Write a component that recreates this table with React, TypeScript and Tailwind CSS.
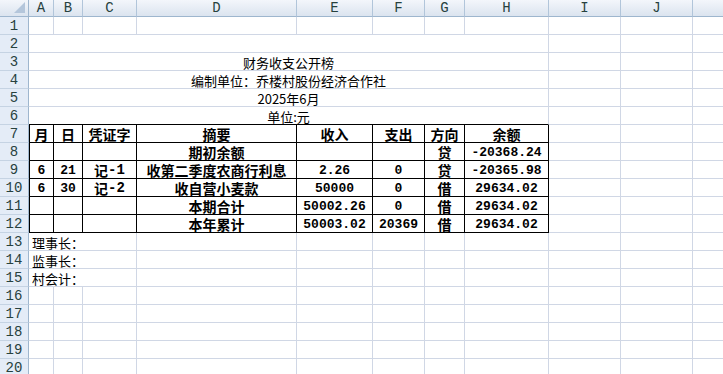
import React from 'react';

// column letters A..K
const COLS = ['A', 'B', 'C', 'D', 'E', 'F', 'G', 'H', 'I', 'J', 'K'];

const SPAN: Record<number, string> = { 1: '', 3: 'col-span-3', 8: 'col-span-8' };

const cjk = "font-['Noto_Sans_CJK_SC','Noto_Sans',sans-serif]";
const mono = "font-['Liberation_Mono','Noto_Sans_CJK_SC',monospace]";

interface CellProps {
  span?: number;
  children?: React.ReactNode;
  className?: string;
  r?: boolean;
  b?: boolean;
  l?: boolean;
}

function Cell({ span = 1, children, className = '', r, b, l }: CellProps) {
  return (
    <div
      className={`flex items-center leading-none whitespace-nowrap overflow-hidden text-black border-r border-b ${SPAN[span]} ${r ? 'border-r-black' : 'border-r-[#d0d7e5]'} ${b ? 'border-b-black' : 'border-b-[#d0d7e5]'} ${l ? 'border-l border-l-black' : ''} ${className}`}
    >
      {children}
    </div>
  );
}

function RowHead({ n }: { n: number }) {
  return (
    <div className={`flex items-center justify-center leading-none pt-[1px] bg-[#e4ecf7] border-r border-b border-r-[#9eb6ce] border-b-[#c5d3e3] text-[14px] text-[#27413e] ${mono}`}>
      {n}
    </div>
  );
}

// table body: month, day, voucher, summary, income, expense, direction, balance
const TABLE: string[][] = [
  ['月', '日', '凭证字', '摘要', '收入', '支出', '方向', '余额'],
  ['', '', '', '期初余额', '', '', '贷', '-20368.24'],
  ['6', '21', '记-1', '收第二季度农商行利息', '2.26', '0', '贷', '-20365.98'],
  ['6', '30', '记-2', '收自营小麦款', '50000', '0', '借', '29634.02'],
  ['', '', '', '本期合计', '50002.26', '0', '借', '29634.02'],
  ['', '', '', '本年累计', '50003.02', '20369', '借', '29634.02'],
];

const TITLES: Record<number, string> = {
  3: '财务收支公开榜',
  4: '编制单位：乔楼村股份经济合作社',
  5: '2025年6月',
  6: '单位:元',
};

const SIGNS: Record<number, string> = { 13: '理事长：', 14: '监事长：', 15: '村会计：' };

function Tail() {
  return (
    <>
      <Cell />
      <Cell />
      <Cell />
    </>
  );
}

export default function App() {
  const rows: React.ReactNode[] = [];

  for (let n = 1; n <= 20; n++) {
    const cells: React.ReactNode[] = [<RowHead key="h" n={n} />];

    if (n === 1 || n >= 16) {
      COLS.forEach(c => cells.push(<Cell key={c} />));
    } else if (n >= 2 && n <= 6) {
      cells.push(
        <Cell key="m" span={8} b={n === 6} className={`justify-center pt-[1px] text-[13px] ${cjk}`}>
          {TITLES[n] || ''}
        </Cell>
      );
      cells.push(<Tail key="t" />);
    } else if (n >= 7 && n <= 12) {
      const data = TABLE[n - 7];
      data.forEach((txt, i) => {
        const isNum = /^[-0-9.]+$/.test(txt);
        cells.push(
          <Cell
            key={i}
            r
            b
            l={i === 0}
            className={`justify-center pt-[1px] font-bold ${isNum ? `text-[13px] ${mono}` : `text-[14px] ${cjk}`}`}
          >
            {txt.startsWith('记') ? (
              <>
                <span className={cjk}>记</span>
                <span className={mono}>{txt.slice(1)}</span>
              </>
            ) : (
              txt
            )}
          </Cell>
        );
      });
      cells.push(<Tail key="t" />);
    } else {
      cells.push(
        <Cell key="s" span={3} className={`pl-[3px] pt-[1px] text-[13px] ${cjk}`}>
          {SIGNS[n]}
        </Cell>
      );
      ['D', 'E', 'F', 'G', 'H', 'I', 'J', 'K'].forEach(c => cells.push(<Cell key={c} />));
    }

    rows.push(<React.Fragment key={n}>{cells}</React.Fragment>);
  }

  return (
    <div className="w-[723px] h-[374px] overflow-hidden bg-white">
      <div className="grid grid-cols-[29px_25px_29px_54px_160px_76px_52px_40px_84px_72px_72px_90px] grid-rows-[17px] auto-rows-[18px] w-[785px]">
        {/* corner */}
        <div className="relative bg-gradient-to-b from-[#f3f6fb] to-[#dbe4ef] border-r border-b border-r-[#9eb6ce] border-b-[#9eb6ce]">
          <div className="absolute right-[3px] bottom-[3px] w-0 h-0 border-l-[11px] border-l-transparent border-b-[11px] border-b-[#b4c6db]" />
        </div>
        {COLS.map(c => (
          <div
            key={c}
            className={`flex items-center justify-center leading-none bg-gradient-to-b from-[#f3f6fb] to-[#dbe4ef] border-r border-b border-r-[#b1c5da] border-b-[#9eb6ce] text-[14px] text-[#27413e] ${mono}`}
          >
            {c}
          </div>
        ))}
        {rows}
      </div>
    </div>
  );
}
